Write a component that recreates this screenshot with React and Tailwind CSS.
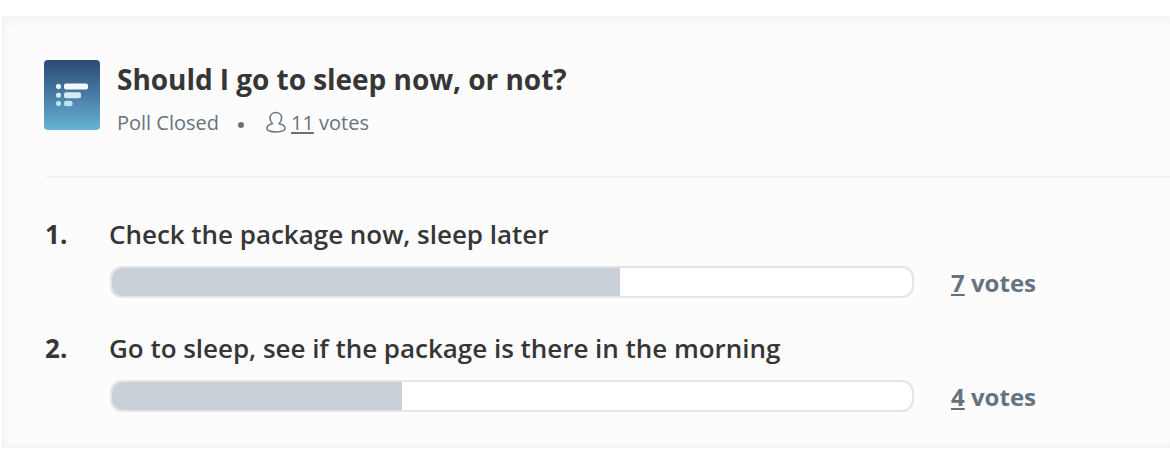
const options = [
  { id: 1, label: "Check the package now, sleep later", votes: 7 },
  { id: 2, label: "Go to sleep, see if the package is there in the morning", votes: 4 },
];

const total = options.reduce((sum, option) => sum + option.votes, 0);

const PollIcon = () => (
  <div className="flex h-[70px] w-14 shrink-0 rounded bg-linear-to-b from-[#2c4a75] to-[#68b2d6] pt-[23px] pl-[11px]">
    <svg width="34" height="24" viewBox="0 0 34 24" className="blur-[0.7px]">
      <g fill="#f3f8fc">
        <rect x="1" y="1" width="5" height="5" rx="2" />
        <rect x="9" y="0.5" width="24" height="6" rx="2" />
      </g>
      <g fill="#d3eaf2">
        <rect x="1" y="9.7" width="5" height="5" rx="2" />
        <rect x="9" y="9.2" width="17" height="6" rx="2" />
      </g>
      <g fill="#b8e3ef">
        <rect x="1" y="18" width="5" height="5" rx="2" />
        <rect x="9" y="17.8" width="8.5" height="5.4" rx="2" />
      </g>
    </svg>
  </div>
);

// Vote count with a full underline below the digits
const VoteCount = ({ count }) => (
  <span className="underline decoration-2 underline-offset-2 [text-decoration-skip-ink:none]">
    {count}
  </span>
);

const PollOption = ({ option }) => (
  <li className="flex h-[114px] text-[26px] leading-9 text-[#363636]">
    <span className="w-16 shrink-0 pl-px font-bold">{option.id}.</span>
    <div className="pl-px">
      <p className="font-semibold tracking-[-0.03px] whitespace-nowrap">
        {option.label}
      </p>
      <div className="mt-3.5 ml-px flex h-8 items-center">
        <div className="h-8 w-[804px] overflow-hidden rounded-xl border-2 border-[#e4e5e7] bg-white">
          <div
            className="h-full bg-[#c9d0d8]"
            style={{ width: `${Math.floor((option.votes / total) * 1000 - 1) / 10}%` }}
          />
        </div>
        <span className="mt-0.5 ml-[37px] text-2xl leading-8 font-bold text-[#67727f]">
          <VoteCount count={option.votes} /> votes
        </span>
      </div>
    </div>
  </li>
);

const App = () => (
  <main className="h-[456px] overflow-hidden bg-white pt-4 pl-[2px] font-['Open_Sans',sans-serif]">
    <section className="h-[432px] border-y-4 border-l-2 border-t-[#f4f5f7] border-b-[#f3f5f7] border-l-[#f2f3f5] bg-[#fcfcfc] pt-10 pl-10 shadow-[inset_2px_4px_8px_-3px_#eff0f2]">
      {/* Header */}
      <header className="flex h-[118px] gap-[17px]">
        <PollIcon />
        <div>
          <h1 className="-mt-px text-[28px] leading-10 font-bold tracking-[-0.04px] text-[#363636]">
            Should I go to sleep now, or not?
          </h1>
          <div className="mt-[9px] flex items-center text-xl leading-[30px] text-[#67727f]">
            <span>Poll Closed</span>
            <span className="mt-1 mr-[22px] ml-[19px] size-1.5 rounded-full bg-[#67727f]" />
            <svg
              width="20"
              height="22"
              viewBox="0 0 20 22"
              fill="none"
              stroke="currentColor"
              strokeWidth="1.5"
              strokeLinejoin="round"
              className="-mt-0.5"
            >
              <path d="M6.6 12.8C4.9 11.3 4 9.2 4 7.1 4 3.6 6.6 1.4 9.8 1.4s5.8 2.2 5.8 5.7c0 2.1-.9 4.2-2.6 5.7 3.6.6 6 2.5 6 4.8 0 2.2-4 3.3-9.2 3.3S.8 19.8.8 17.6c0-2.3 2.2-4.2 5.8-4.8Z" />
            </svg>
            <span className="ml-[5px]">
              <VoteCount count={total} /> votes
            </span>
          </div>
        </div>
      </header>
      <hr className="-mt-0.5 ml-0.5 border-t-2 border-[#f0f1f3]" />

      {/* Results */}
      <ol className="pt-[38px]">
        {options.map((option) => (
          <PollOption key={option.id} option={option} />
        ))}
      </ol>
    </section>
  </main>
);

export default App;
